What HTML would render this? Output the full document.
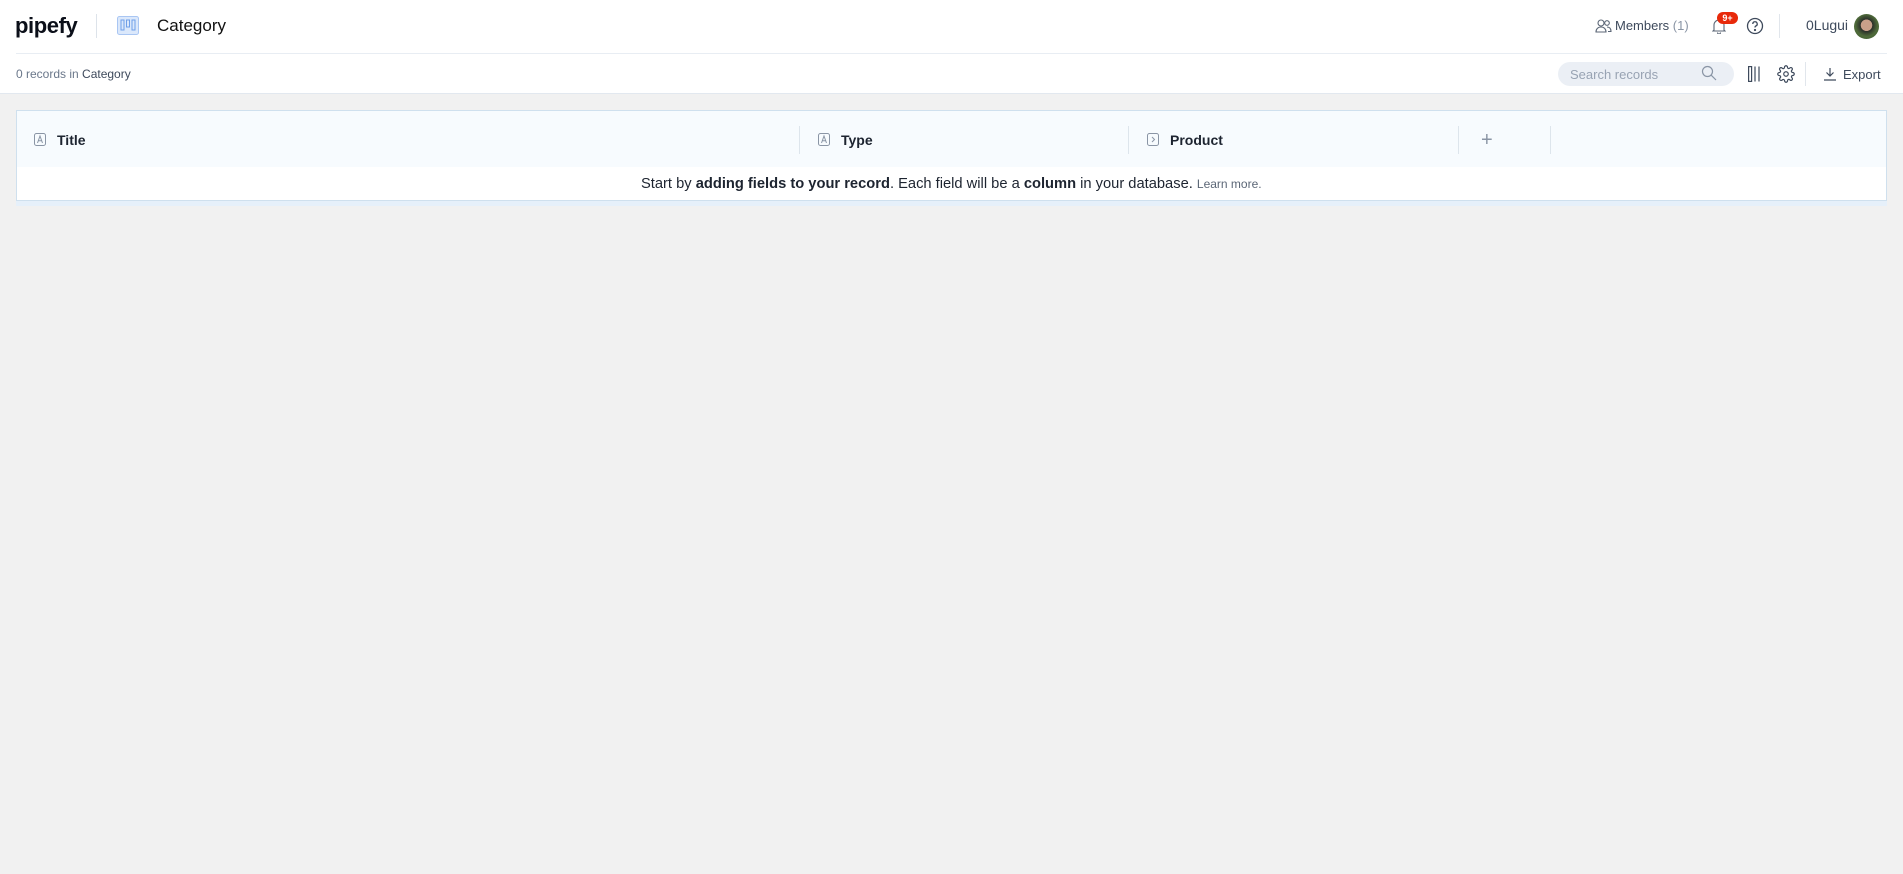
<!DOCTYPE html>
<html><head><meta charset="utf-8"><style>
*{box-sizing:border-box;margin:0;padding:0}
body{width:1903px;height:874px;background:#f1f1f1;font-family:"Liberation Sans",sans-serif;position:relative;overflow:hidden;color:#1d2430}
.a{position:absolute}
.top{left:0;top:0;width:1903px;height:94px;background:#fff;border-bottom:1px solid #e2e8ef}
.t{white-space:nowrap}
</style></head><body>
<div class="a top"></div>
<div class="a" style="left:16px;top:53px;width:1871px;height:1px;background:#e8edf3"></div>
<div class="a t" style="left:15px;top:13px;font-size:22px;font-weight:bold;letter-spacing:-0.4px;color:#0b0f19">pipefy</div>
<div class="a" style="left:96px;top:14px;width:1px;height:24px;background:#dde3ea"></div>
<svg class="a" style="left:117px;top:16px" width="22" height="19" viewBox="0 0 22 19"><rect x="0.5" y="0.5" width="21" height="18" rx="2" fill="#dbe8fb" stroke="#a9c6f3"/><rect x="4" y="4" width="3" height="10" fill="none" stroke="#6f9fe8"/><rect x="9.5" y="4" width="3" height="7" fill="none" stroke="#6f9fe8"/><rect x="15" y="4" width="3" height="10" fill="none" stroke="#6f9fe8"/></svg>
<div class="a t" style="left:157px;top:16px;font-size:17px;color:#111">Category</div>

<svg class="a" style="left:1595px;top:19px" width="17" height="14" viewBox="0 0 17 14" fill="none" stroke="#5b6676" stroke-width="1.1"><circle cx="6" cy="4" r="3"/><path d="M1 13c0-3 2-5 5-5s5 2 5 5z"/><circle cx="12" cy="4" r="2.3"/><path d="M12 8c2.5 0 4 1.5 4 4.5h-3"/></svg>
<div class="a t" style="left:1615px;top:18px;font-size:13px;color:#3e4a5c">Members <span style="color:#8a95a5">(1)</span></div>
<svg class="a" style="left:1712px;top:18px" width="14" height="16" viewBox="0 0 14 16" fill="none" stroke="#5b6676" stroke-width="1.1"><path d="M2 12V7a5 5 0 0 1 10 0v5l1 1H1z"/><path d="M5.5 14.5a1.5 1.5 0 0 0 3 0"/></svg>
<div class="a t" style="left:1717px;top:12px;width:21px;height:12px;border-radius:6px;background:#e8290a;color:#fff;font-size:9px;font-weight:bold;text-align:center;line-height:12px">9+</div>
<svg class="a" style="left:1746px;top:17px" width="18" height="18" viewBox="0 0 18 18" fill="none" stroke="#3e4a5c" stroke-width="1.3"><circle cx="9" cy="9" r="7.5"/><path d="M6.8 7a2.2 2.2 0 1 1 3 2c-.6.3-.8.7-.8 1.5"/><circle cx="9" cy="13" r=".5" fill="#3e4a5c"/></svg>
<div class="a" style="left:1779px;top:14px;width:1px;height:24px;background:#e1e6ec"></div>
<div class="a t" style="left:1806px;top:17px;font-size:14px;color:#3e4a5c">0Lugui</div>
<div class="a" style="left:1854px;top:14px;width:25px;height:25px;border-radius:50%;background:radial-gradient(circle at 50% 45%,#c9a08a 0 30%,#2b2f2a 32%,#4f6b3a 60%,#3a5a2e)"></div>

<div class="a t" style="left:16px;top:67px;font-size:12px;color:#6a778a">0 records in <span style="color:#3e4a5c">Category</span></div>
<div class="a" style="left:1558px;top:62px;width:176px;height:24px;border-radius:12px;background:#ebeff5"></div>
<div class="a t" style="left:1570px;top:67px;font-size:13px;color:#98a3b3">Search records</div>
<svg class="a" style="left:1701px;top:65px" width="16" height="16" viewBox="0 0 16 16" fill="none" stroke="#8a95a5" stroke-width="1.2"><circle cx="6.5" cy="6.5" r="5"/><path d="M10.2 10.2L15 15"/></svg>
<svg class="a" style="left:1748px;top:66px" width="12" height="16" viewBox="0 0 12 16" fill="none" stroke="#3e4a5c" stroke-width="1.2"><rect x="0.6" y="0.6" width="3" height="14.8"/><path d="M7 .5v15M11 .5v15"/></svg>
<svg class="a" style="left:1777px;top:65px" width="18" height="18" viewBox="0 0 24 24" fill="none" stroke="#3e4a5c" stroke-width="1.6"><circle cx="12" cy="12" r="3"/><path d="M19.4 15a1.7 1.7 0 0 0 .3 1.8l.1.1a2 2 0 1 1-2.8 2.8l-.1-.1a1.7 1.7 0 0 0-1.8-.3 1.7 1.7 0 0 0-1 1.5V21a2 2 0 1 1-4 0v-.1a1.7 1.7 0 0 0-1.1-1.5 1.7 1.7 0 0 0-1.8.3l-.1.1a2 2 0 1 1-2.8-2.8l.1-.1a1.7 1.7 0 0 0 .3-1.8 1.7 1.7 0 0 0-1.5-1H3a2 2 0 1 1 0-4h.1a1.7 1.7 0 0 0 1.5-1.1 1.7 1.7 0 0 0-.3-1.8l-.1-.1a2 2 0 1 1 2.8-2.8l.1.1a1.7 1.7 0 0 0 1.8.3H9a1.7 1.7 0 0 0 1-1.5V3a2 2 0 1 1 4 0v.1a1.7 1.7 0 0 0 1 1.5 1.7 1.7 0 0 0 1.8-.3l.1-.1a2 2 0 1 1 2.8 2.8l-.1.1a1.7 1.7 0 0 0-.3 1.8V9a1.7 1.7 0 0 0 1.5 1H21a2 2 0 1 1 0 4h-.1a1.7 1.7 0 0 0-1.5 1z"/></svg>
<div class="a" style="left:1805px;top:62px;width:1px;height:24px;background:#e1e6ec"></div>
<svg class="a" style="left:1823px;top:67px" width="14" height="14" viewBox="0 0 14 14" fill="none" stroke="#3e4a5c" stroke-width="1.2"><path d="M7 1v8M3.5 5.5L7 9l3.5-3.5M1 13h12"/></svg>
<div class="a t" style="left:1843px;top:67px;font-size:13px;color:#3e4a5c">Export</div>

<div class="a" style="left:16px;top:110px;width:1871px;height:96px;background:#e6f0fa"></div>
<div class="a" style="left:16px;top:110px;width:1871px;height:58px;background:#f7fbfe;border:1px solid #cfe0ee"></div>
<div class="a" style="left:16px;top:167px;width:1871px;height:34px;background:#fff;border:1px solid #cfe0ee;border-top:none"></div>
<div class="a" style="left:799px;top:126px;width:1px;height:28px;background:#dde5ec"></div>
<div class="a" style="left:1128px;top:126px;width:1px;height:28px;background:#dde5ec"></div>
<div class="a" style="left:1458px;top:126px;width:1px;height:28px;background:#dde5ec"></div>
<div class="a" style="left:1550px;top:126px;width:1px;height:28px;background:#dde5ec"></div>
<svg class="a" style="left:34px;top:133px" width="12" height="13" viewBox="0 0 12 13" fill="none" stroke="#8a95a5"><rect x=".5" y=".5" width="11" height="12" rx="2"/><path d="M3.5 10L6 3l2.5 7M4.3 7.8h3.4"/></svg>
<div class="a t" style="left:57px;top:132px;font-size:14px;font-weight:bold;color:#1d2430">Title</div>
<svg class="a" style="left:818px;top:133px" width="12" height="13" viewBox="0 0 12 13" fill="none" stroke="#8a95a5"><rect x=".5" y=".5" width="11" height="12" rx="2"/><path d="M3.5 10L6 3l2.5 7M4.3 7.8h3.4"/></svg>
<div class="a t" style="left:841px;top:132px;font-size:14px;font-weight:bold;color:#1d2430">Type</div>
<svg class="a" style="left:1147px;top:133px" width="12" height="13" viewBox="0 0 12 13" fill="none" stroke="#8a95a5"><rect x=".5" y=".5" width="11" height="12" rx="2"/><path d="M5 4l2.5 2.5L5 9"/></svg>
<div class="a t" style="left:1170px;top:132px;font-size:14px;font-weight:bold;color:#1d2430">Product</div>
<div class="a t" style="left:1481px;top:129px;font-size:20px;color:#8a95a5">+</div>
<div class="a t" style="left:641px;top:176px;font-size:14.7px;color:#1d2430">Start by <b>adding fields to your record</b>. Each field will be a <b>column</b> in your database. <span style="font-size:12px;color:#5b6676">Learn more.</span></div>
</body></html>
